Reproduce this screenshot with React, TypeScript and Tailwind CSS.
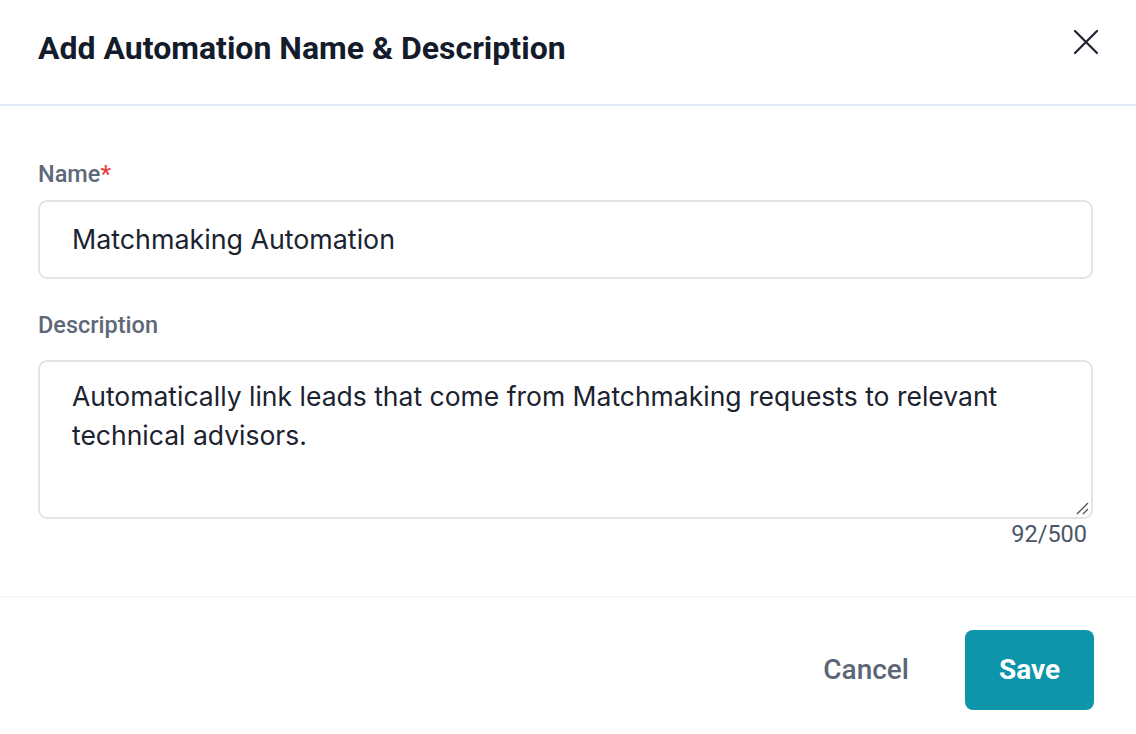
import React from "react";

export default function App() {
  return (
    <div className="w-[1136px] h-[734px] bg-white flex flex-col" style={{ fontFamily: "Roboto, 'Liberation Sans', sans-serif" }}>
      <div className="h-[106px] flex items-center justify-between pl-[38px] pr-[36px] border-b-2 border-[#e2e8f3] shrink-0">
        <h1 className="text-[32px] font-bold text-[#141c2b] leading-[40px] -mt-[9px]">Add Automation Name &amp; Description</h1>
        <button className="w-[28px] h-[28px] flex items-center justify-center -mt-[20px]">
          <svg width="26" height="26" viewBox="0 0 26 26" fill="none" stroke="#1c2230" strokeWidth="2.2" strokeLinecap="round">
            <path d="M2 2L24 24M24 2L2 24" />
          </svg>
        </button>
      </div>
      <div className="flex flex-col pl-[38px] pr-[43px] pt-[54px] pb-[47px] border-b-2 border-[#f5f7fd]">
        <label className="text-[23.5px] font-medium text-[#5e6878] leading-[28px]">
          Name<span className="text-[#e53e3e]">*</span>
        </label>
        <div className="mt-[12px] h-[79px] rounded-[9px] border-2 border-[#e4e4e4] flex items-center px-[32px]">
          <span className="text-[26.8px] text-[#1b2230]" style={{ fontFamily: "Inter, sans-serif" }}>Matchmaking Automation</span>
        </div>
        <label className="mt-[32px] text-[23.5px] font-medium text-[#5e6878] leading-[28px]">Description</label>
        <div className="mt-[21px] h-[159px] rounded-[9px] border-2 border-[#e4e4e4] relative pl-[32px] pr-[40px] pt-[15px]">
          <p className="text-[26.5px] leading-[39px] text-[#1b2230]" style={{ fontFamily: "Inter, sans-serif" }}>
            Automatically link leads that come from Matchmaking requests to relevant technical advisors.
          </p>
          <svg className="absolute right-[2px] bottom-[2px]" width="14" height="14" viewBox="0 0 14 14" stroke="#555" strokeWidth="1.4">
            <path d="M13 2L2 13M13 8L8 13" />
          </svg>
        </div>
        <div className="mt-[0px] text-right pr-[6px] text-[23.5px] leading-[30px] text-[#4a5668]">92/500</div>
      </div>
      <div className="flex items-center justify-end gap-[56px] pr-[42px] pt-[32px]">
        <button className="text-[28px] font-medium text-[#5c6677]">Cancel</button>
        <button className="w-[129px] h-[80px] rounded-[8px] bg-[#0f95aa] text-white text-[28px] font-bold">Save</button>
      </div>
    </div>
  );
}
